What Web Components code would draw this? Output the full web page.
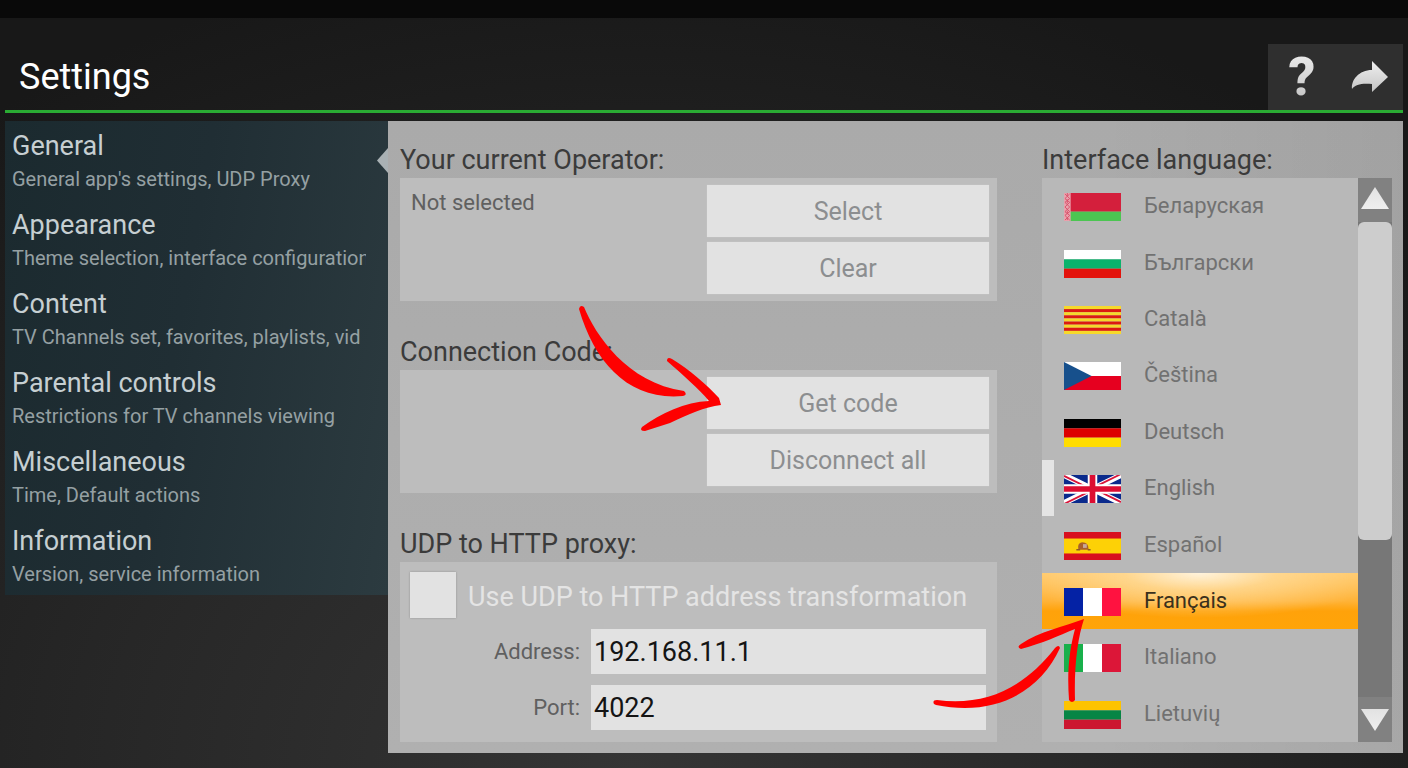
<!DOCTYPE html>
<html lang="en">
<head>
<meta charset="utf-8">
<meta name="viewport" content="width=device-width, initial-scale=1">
<title>Settings</title>
<style>
  body {
    margin: 0;
    font-family: Roboto, "Noto Sans", sans-serif;
    background: #090909;
  }
</style>
</head>
<body>
<settings-app>
  <settings-header slot="header" heading="Settings"></settings-header>

  <nav-item slot="nav" active heading="General" note="General app's settings, UDP Proxy"></nav-item>
  <nav-item slot="nav" heading="Appearance" note="Theme selection, interface configuration"></nav-item>
  <nav-item slot="nav" heading="Content" note="TV Channels set, favorites, playlists, vid"></nav-item>
  <nav-item slot="nav" heading="Parental controls" note="Restrictions for TV channels viewing"></nav-item>
  <nav-item slot="nav" heading="Miscellaneous" note="Time, Default actions"></nav-item>
  <nav-item slot="nav" heading="Information" note="Version, service information"></nav-item>

  <settings-group heading="Your current Operator:">
    <action-row note="Not selected">
      <action-button>Select</action-button>
      <action-button>Clear</action-button>
    </action-row>
  </settings-group>

  <settings-group heading="Connection Code:">
    <action-row>
      <action-button>Get code</action-button>
      <action-button>Disconnect all</action-button>
    </action-row>
    <hint-arrow slot="hint" kind="code"></hint-arrow>
  </settings-group>

  <settings-group heading="UDP to HTTP proxy:">
    <proxy-form address="192.168.11.1" port="4022"></proxy-form>
  </settings-group>

  <settings-group slot="aside" heading="Interface language:">
    <language-list current="en" focused="fr"></language-list>
    <hint-arrow slot="hint" kind="language"></hint-arrow>
  </settings-group>
</settings-app>

<script>
/**
 * Base class: renders the markup of a component into an open shadow root
 */
class BaseElement extends HTMLElement {
  constructor() {
    super()
    this.attachShadow({ mode: 'open' })
  }

  connectedCallback() {
    this.shadowRoot.innerHTML = this.render()
  }

  attr(name) {
    return this.getAttribute(name) || ''
  }
}

/**
 * @class SettingsApp
 * @description Page frame: header, navigation on the left, panel on the right
 */
class SettingsApp extends BaseElement {
  render() {
    return `
      <style>
        :host {
          display: flex;
          flex-direction: column;
          box-sizing: border-box;
          min-height: 100vh;
          border-top: 18px solid #090909;
          padding: 0 5px 15px;
          background: radial-gradient(ellipse 75% 110% at 45% 100%, #353535 0%, #272727 50%, #181818 100%);
        }

        .body {
          flex: 1;
          display: grid;
          grid-template-columns: minmax(0, 383fr) minmax(0, 1015fr);
          margin-top: 8px;
        }

        nav {
          align-self: start;
          background: linear-gradient(100deg, #1b2a2f, #202e34 45%, #2c3b40);
        }

        main {
          display: grid;
          grid-template-columns: minmax(0, 597fr) minmax(0, 350fr);
          column-gap: 45px;
          padding: 21px 11px 11px 12px;
          background: linear-gradient(90deg, rgba(0, 0, 0, 0) 70%, rgba(0, 0, 0, 0.05)),
                      linear-gradient(180deg, #aaaaaa, #b0b0b0);
        }

        .groups {
          display: flex;
          flex-direction: column;
          gap: 33px;
        }

        .groups ::slotted(:last-of-type) {
          flex: 1;
        }
      </style>

      <slot name="header"></slot>
      <div class="body">
        <nav><slot name="nav"></slot></nav>
        <main>
          <div class="groups"><slot></slot></div>
          <slot name="aside"></slot>
        </main>
      </div>
    `
  }
}

class SettingsHeader extends BaseElement {
  render() {
    return `
      <style>
        :host {
          display: flex;
          justify-content: space-between;
          align-items: flex-end;
          height: 92px;
          border-bottom: 3px solid #2aab33;
        }

        h1 {
          margin: 0;
          padding: 0 0 9px 14px;
          font-size: 36px;
          line-height: 48px;
          font-weight: 400;
          color: #fff;
        }

        .actions {
          display: grid;
          grid-template-columns: 1fr 1fr;
          width: 135px;
          height: 66px;
          background: #2f2f2f;
        }

        button {
          display: grid;
          place-items: center;
          padding: 0;
          border: 0;
          background: none;
          font: inherit;
        }

        .help span {
          font-size: 54px;
          line-height: 66px;
          font-weight: 800;
          color: transparent;
          background: linear-gradient(180deg, #f2f2f2, #bcbcbc);
          -webkit-background-clip: text;
          background-clip: text;
        }
      </style>

      <h1>${this.attr('heading')}</h1>
      <div class="actions">
        <button class="help" type="button" aria-label="Help"><span>?</span></button>
        <button type="button" aria-label="Back">
          <svg width="38" height="34" viewBox="0 0 38 34">
            <defs>
              <linearGradient id="shade" x1="0" y1="0" x2="0" y2="1">
                <stop offset="0" stop-color="#f0f0f0"/>
                <stop offset="1" stop-color="#c4c4c4"/>
              </linearGradient>
            </defs>
            <path fill="url(#shade)" d="M22 1 L38 17 L22 32 V24 C13 23 5 24 2 29 C1 20 9 10 22 10 Z"/>
          </svg>
        </button>
      </div>
    `
  }
}

class NavItem extends BaseElement {
  render() {
    return `
      <style>
        :host {
          display: block;
          position: relative;
        }

        a {
          display: block;
          padding: 8px 22px 5px 7px;
          color: #c6cfd2;
          text-decoration: none;
        }

        span {
          display: block;
          overflow: hidden;
          white-space: nowrap;
        }

        .heading {
          font-size: 27px;
          line-height: 34px;
        }

        .note {
          font-size: 20px;
          line-height: 32px;
          color: #95a0a3;
        }

        /* notch that points from the panel to the open page */
        :host([active])::after {
          content: "";
          position: absolute;
          right: 0;
          top: 27px;
          width: 11px;
          height: 25px;
          background: #a9b1b4;
          clip-path: polygon(100% 0, 100% 100%, 0 50%);
        }
      </style>

      <a href="#">
        <span class="heading">${this.attr('heading')}</span>
        <span class="note">${this.attr('note')}</span>
      </a>
    `
  }
}

class SettingsGroup extends BaseElement {
  render() {
    return `
      <style>
        :host {
          display: flex;
          flex-direction: column;
          position: relative;
        }

        h2 {
          margin: 0;
          font-size: 27px;
          line-height: 36px;
          font-weight: 400;
          color: #3b3b3b;
        }

        .box {
          flex: 1;
          display: grid;
          background: #bdbdbd;
        }

        :host([slot="aside"]) .box {
          background: #b8b8b8;
        }
      </style>

      <h2>${this.attr('heading')}</h2>
      <div class="box"><slot></slot></div>
      <slot name="hint"></slot>
    `
  }
}

class ActionRow extends BaseElement {
  render() {
    return `
      <style>
        :host {
          display: grid;
          grid-template-columns: minmax(0, 288fr) minmax(0, 282fr);
          column-gap: 8px;
          padding: 7px 8px 7px 11px;
        }

        p {
          margin: 0;
          font-size: 22px;
          line-height: 36px;
          color: #606060;
        }

        .buttons {
          display: grid;
          gap: 5px;
        }
      </style>

      <p>${this.attr('note')}</p>
      <div class="buttons"><slot></slot></div>
    `
  }
}

class ActionButton extends BaseElement {
  render() {
    return `
      <style>
        :host {
          display: block;
        }

        button {
          display: block;
          width: 100%;
          height: 52px;
          padding: 0;
          border: 0;
          background: #e2e2e2;
          box-shadow: 0 0 1px #cfcfcf;
          font: inherit;
          font-size: 25px;
          color: #8c8e90;
        }
      </style>

      <button type="button"><slot></slot></button>
    `
  }
}

class ProxyForm extends BaseElement {
  render() {
    return `
      <style>
        :host {
          display: grid;
          grid-template-columns: 170px minmax(0, 1fr);
          align-content: start;
          align-items: center;
          gap: 11px;
          padding: 10px 11px 12px 10px;
        }

        .check {
          grid-column: 1 / -1;
          display: flex;
          align-items: center;
          gap: 12px;
          font-size: 27px;
          line-height: 42px;
          white-space: nowrap;
          color: #e4e4e4;
        }

        .check span {
          padding-top: 4px;
        }

        .check input {
          appearance: none;
          flex: none;
          width: 46px;
          height: 46px;
          margin: 0;
          background: #e2e2e2;
          box-shadow: 0 0 2px #8f8f8f;
        }

        .caption {
          text-align: right;
          font-size: 22px;
          line-height: 45px;
          color: #606060;
        }

        .text {
          box-sizing: border-box;
          width: 100%;
          height: 45px;
          padding: 0 3px;
          border: 0;
          border-radius: 0;
          background: #e2e2e2;
          font: inherit;
          font-size: 27px;
          color: #141414;
        }
      </style>

      <label class="check"><input type="checkbox"><span>Use UDP to HTTP address transformation</span></label>
      <label class="caption" for="address">Address:</label>
      <input class="text" id="address" type="text" value="${this.attr('address')}">
      <label class="caption" for="port">Port:</label>
      <input class="text" id="port" type="text" value="${this.attr('port')}">
    `
  }
}

// Equal stripes; the flags share a 60x30 view box
const rows = colors => colors.map((c, i) =>
  `<rect y="${i * 30 / colors.length}" width="60" height="${30 / colors.length}" fill="${c}"/>`).join('')
const columns = colors => colors.map((c, i) =>
  `<rect x="${i * 20}" width="20" height="30" fill="${c}"/>`).join('')

const FLAGS = {
  be: `
    <rect width="60" height="20" fill="#d41f3c"/>
    <rect y="20" width="60" height="10" fill="#4cc552"/>
    <rect width="7" height="30" fill="#e9a3ae"/>
    <path d="M1 1l5 5-5 4 5 5-5 5 5 4-5 5M6 1L1 6l5 4-5 5 5 5-5 4 5 5M3.500 0v3m0 4v4m0 8v3m0 4v3"
      fill="none" stroke="#d8506a" stroke-width="1"/>`,
  bg: rows(['#ffffff', '#0ab36c', '#e3120b']),
  ca: rows(['#f6d92b', '#dc1a12', '#f6d92b', '#dc1a12', '#f6d92b', '#dc1a12', '#f6d92b', '#dc1a12', '#f6d92b']),
  cs: `
    ${rows(['#ffffff', '#e6001f'])}
    <path d="M0 0L29 15L0 30z" fill="#17508c"/>`,
  de: rows(['#000000', '#dd0000', '#ffdd00']),
  en: `
    <rect width="60" height="30" fill="#0a2a8c"/>
    <path d="M0 0L60 30M60 0L0 30" stroke="#fff" stroke-width="6"/>
    <path d="M0 1L28 15M32 15L60 29M60 -1L32 13M28 17L0 31" stroke="#d8153a" stroke-width="2"/>
    <path d="M30 0V30M0 15H60" stroke="#fff" stroke-width="10"/>
    <path d="M30 0V30M0 15H60" stroke="#dc0d32" stroke-width="6"/>`,
  es: `
    <rect width="60" height="30" fill="#d80f1e"/>
    <rect y="7" width="60" height="16" fill="#fdd106"/>
    <path d="M15 18Q14 12 19 11Q26 11 26 19H16z" fill="#a8602c"/>
    <rect x="20" y="13" width="4" height="4" fill="#c9a99a"/>
    <path d="M13 19h4m8 0h3" stroke="#8d5a24" stroke-width="1.500" fill="none"/>`,
  fr: columns(['#0422a5', '#ffffff', '#ff1240']),
  it: columns(['#18b04b', '#ffffff', '#dc1638']),
  lt: rows(['#fdc300', '#068545', '#cc1630'])
}

/**
 * @class FlagIcon
 * @property {string} code - language code, a key of FLAGS
 */
class FlagIcon extends BaseElement {
  render() {
    return `
      <style>
        :host {
          display: block;
          width: 57px;
          height: 28px;
          overflow: hidden;
        }

        svg {
          display: block;
          width: 100%;
          height: 100%;
        }
      </style>

      <svg viewBox="0 0 60 30" preserveAspectRatio="none">${FLAGS[this.attr('code')]}</svg>
    `
  }
}

class ScrollRail extends BaseElement {
  render() {
    return `
      <style>
        :host {
          display: flex;
          flex-direction: column;
          background: #777;
        }

        button {
          display: grid;
          place-items: center;
          height: 45px;
          padding: 0;
          border: 0;
          background: #818181;
        }

        button:first-of-type {
          height: 44px;
          padding-bottom: 4px;
        }

        .track {
          flex: 1;
        }

        .thumb {
          height: 67%;
          border-radius: 6px;
          background: #cdcdcd;
        }
      </style>

      <svg width="0" height="0" style="position: absolute">
        <defs>
          <linearGradient id="shade" x1="0" y1="0" x2="0" y2="1">
            <stop offset="0" stop-color="#e2e2e2"/>
            <stop offset="1" stop-color="#efefef"/>
          </linearGradient>
        </defs>
      </svg>
      <button type="button" aria-label="Scroll up">
        <svg width="28" height="22" viewBox="0 0 28 22"><path d="M14 0L28 22H0z" fill="url(#shade)"/></svg>
      </button>
      <div class="track"><div class="thumb"></div></div>
      <button type="button" aria-label="Scroll down">
        <svg width="28" height="22" viewBox="0 0 28 22"><path d="M0 0H28L14 22z" fill="url(#shade)"/></svg>
      </button>
    `
  }
}

const LANGUAGES = [
  ['be', 'Беларуская'],
  ['bg', 'Български'],
  ['ca', 'Català'],
  ['cs', 'Čeština'],
  ['de', 'Deutsch'],
  ['en', 'English'],
  ['es', 'Español'],
  ['fr', 'Français'],
  ['it', 'Italiano'],
  ['lt', 'Lietuvių']
]

/**
 * @class LanguageList
 * @property {string} current - language in use, marked by a bar at the left edge
 * @property {string} focused - highlighted row
 */
class LanguageList extends BaseElement {
  render() {
    const item = ([code, name]) => `
      <button type="button" lang="${code}"
        class="${code === this.attr('current') ? 'current' : ''} ${code === this.attr('focused') ? 'focused' : ''}">
        <flag-icon code="${code}"></flag-icon>
        <span>${name}</span>
      </button>`

    return `
      <style>
        :host {
          display: grid;
          grid-template-columns: minmax(0, 1fr) 34px;
        }

        .items {
          display: grid;
          grid-auto-rows: minmax(56px, 1fr);
        }

        button {
          display: flex;
          align-items: center;
          gap: 23px;
          padding: 0 0 0 10px;
          border: 0;
          border-left: 12px solid transparent;
          background: none;
          font: inherit;
          font-size: 22px;
          line-height: 32px;
          color: #717171;
          text-align: left;
        }

        flag-icon {
          margin-top: 2px;
        }

        .current {
          border-left-color: #e4e4e4;
        }

        .focused {
          color: #3a301c;
          background: radial-gradient(ellipse 60% 80% at 50% 0, #fff3dc, rgba(255, 222, 160, 0.7) 40%, rgba(255, 180, 60, 0)) border-box,
                      linear-gradient(180deg, #ffc766, #ffb338 50%, #ffa20a 68%, #ffa408) border-box;
        }
      </style>

      <div class="items">${LANGUAGES.map(item).join('')}</div>
      <scroll-rail></scroll-rail>
    `
  }
}

// Hand-drawn hints that lie over the groups
const HINTS = {
  code: {
    box: '575 300 152 140',
    path: `M579 309Q580 304 584 307C595 334 627 383 684 391Q688 395 683 396C630 401 595 364 579 309z
           M667 361Q667 356 672 359C690 370 706 384 719 398L721 405C704 407 689 414 670 423L645 431
           Q639 431 642 427C661 413 685 402 709 401C699 389 682 374 667 361z`
  },
  language: {
    box: '925 610 170 105',
    path: `M934 704Q932 700 937 700C985 706 1023 689 1055 648Q1059 644 1060 648C1040 692 995 717 936 705z
           M1021 649Q1016 647 1021 644C1040 631 1063 627 1084 619C1078 637 1074 664 1075 700
           Q1072 704 1069 700C1067 673 1069 651 1075 629C1058 636 1043 643 1021 649z`
  }
}

class HintArrow extends BaseElement {
  render() {
    const { box, path } = HINTS[this.attr('kind')]
    return `
      <style>
        :host {
          display: block;
          position: absolute;
          pointer-events: none;
        }

        :host([kind="code"]) {
          right: 270px;
          top: -34px;
          width: 152px;
          height: 140px;
        }

        :host([kind="language"]) {
          left: -117px;
          top: 468px;
          width: 170px;
          height: 105px;
        }

        svg {
          display: block;
          width: 100%;
          height: 100%;
        }
      </style>

      <svg viewBox="${box}"><path d="${path}" fill="#fe0000"/></svg>
    `
  }
}

// Register the web components
customElements.define('settings-app', SettingsApp)
customElements.define('settings-header', SettingsHeader)
customElements.define('nav-item', NavItem)
customElements.define('settings-group', SettingsGroup)
customElements.define('action-row', ActionRow)
customElements.define('action-button', ActionButton)
customElements.define('proxy-form', ProxyForm)
customElements.define('flag-icon', FlagIcon)
customElements.define('scroll-rail', ScrollRail)
customElements.define('language-list', LanguageList)
customElements.define('hint-arrow', HintArrow)
</script>
</body>
</html>
